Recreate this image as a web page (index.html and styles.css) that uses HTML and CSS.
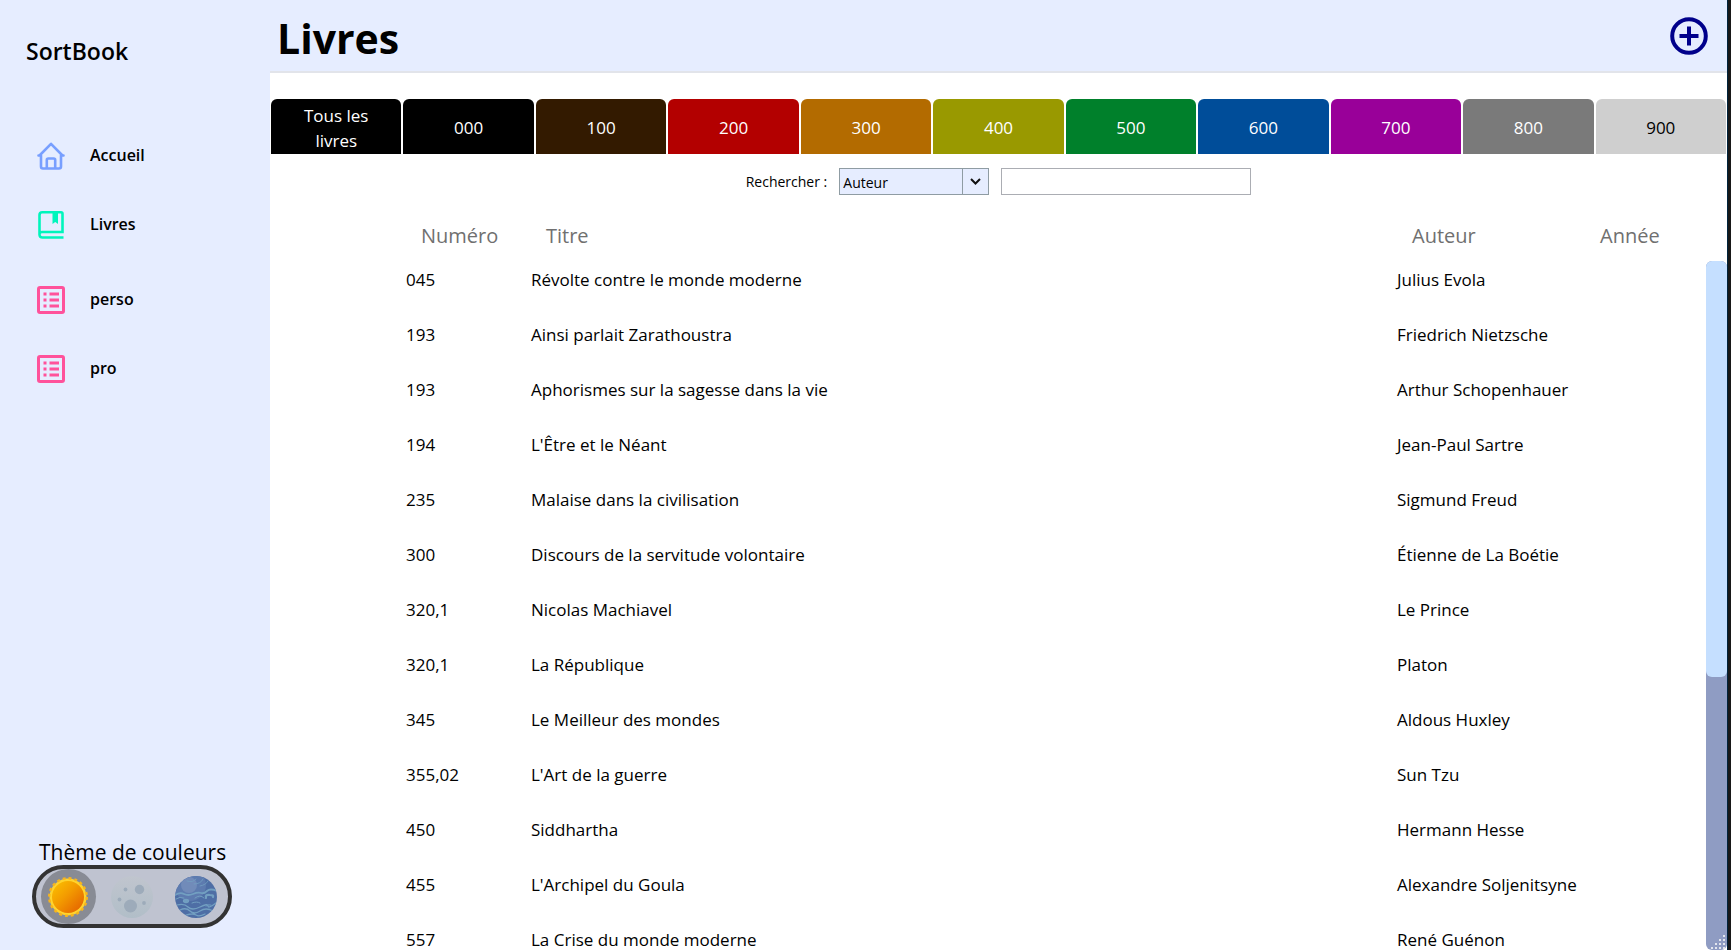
FILE: index.html
```html
<!DOCTYPE html>
<html lang="fr">
<head>
<meta charset="utf-8">
<title>SortBook</title>
<link rel="stylesheet" href="styles.css">
</head>
<body>
<div class="app">
  <aside class="sidebar">
    <div class="brand">SortBook</div>
    <nav class="nav">
      <a class="nav-link" href="#accueil">
        <svg class="nav-icon icon-home" viewBox="0 0 28 28" fill="none" stroke="currentColor" stroke-width="2.600" stroke-linejoin="round" stroke-linecap="round"><path d="M1.500 13.500h1L14 1.800l11.500 11.700h1M4 13.500v11Q4 26.500 6 26.500h16q2 0 2-2v-11M9.800 26V18q0-1.500 1.500-1.500h5.400q1.500 0 1.500 1.500v8"/></svg>
        <span>Accueil</span>
      </a>
      <a class="nav-link" href="#livres">
        <svg class="nav-icon icon-book" viewBox="0 0 28 28" fill="none" stroke="currentColor" stroke-width="2.600"><path d="M26.500 26.500H5.500Q2.500 26.500 2.500 23.500V4Q2.500 1.300 5.300 1.300H24Q25.500 1.300 25.500 2.800V21H5Q2.500 21 2.500 23.500"/><path d="M15.500 1.500h5.500v11.500l-2.750-2-2.750 2z" fill="currentColor" stroke="none"/></svg>
        <span>Livres</span>
      </a>
      <a class="nav-link list-first" href="#perso">
        <svg class="nav-icon icon-list" viewBox="0 0 28 28"><rect x="1.500" y="1.500" width="25" height="25" rx="1.500" fill="none" stroke="currentColor" stroke-width="3"/><path fill="currentColor" d="M6.500 6.500h3v3h-3zM12.500 6.500h9.500v3h-9.500zM6.500 12.500h3v3h-3zM12.500 12.500h9.500v3h-9.500zM6.500 18.500h3v3h-3zM12.500 18.500h9.500v3h-9.500z"/></svg>
        <span>perso</span>
      </a>
      <a class="nav-link" href="#pro">
        <svg class="nav-icon icon-list" viewBox="0 0 28 28"><rect x="1.500" y="1.500" width="25" height="25" rx="1.500" fill="none" stroke="currentColor" stroke-width="3"/><path fill="currentColor" d="M6.500 6.500h3v3h-3zM12.500 6.500h9.500v3h-9.500zM6.500 12.500h3v3h-3zM12.500 12.500h9.500v3h-9.500zM6.500 18.500h3v3h-3zM12.500 18.500h9.500v3h-9.500z"/></svg>
        <span>pro</span>
      </a>
    </nav>
    <fieldset class="theme">
      <legend class="theme-title">Thème de couleurs</legend>
      <div class="theme-switch">
        <label class="theme-option">
          <input class="theme-radio" type="radio" name="theme" aria-label="Clair" checked>
          <svg class="theme-icon" viewBox="0 0 42 42">
            <defs><linearGradient id="sun" x1="0" y1="0" x2="1" y2="1"><stop offset="0" stop-color="#fcc400"/><stop offset=".45" stop-color="#f39a00"/><stop offset="1" stop-color="#e25a00"/></linearGradient></defs>
            <circle cx="21" cy="21" r="18.500" fill="#ffd42e"/>
            <circle cx="21" cy="21" r="18.800" fill="none" stroke="#f8b51c" stroke-width="2.400" stroke-dasharray="2.900 3.006"/>
            <circle cx="21" cy="21" r="16" fill="url(#sun)"/>
          </svg>
        </label>
        <label class="theme-option">
          <input class="theme-radio" type="radio" name="theme" aria-label="Gris">
          <svg class="theme-icon" viewBox="0 0 42 42">
            <defs><linearGradient id="moon" x1="0" y1="0" x2="0" y2="1"><stop offset="0" stop-color="#c0c5ce"/><stop offset="1" stop-color="#b1bec8"/></linearGradient></defs>
            <circle cx="21" cy="21" r="21" fill="url(#moon)"/>
            <g fill="#9dabba"><circle cx="28.500" cy="13.500" r="4.700"/><circle cx="14.500" cy="13.500" r="1.900"/><circle cx="8.500" cy="23.500" r="1.900"/><circle cx="19.500" cy="30" r="6.500"/><circle cx="33" cy="27" r="1.900"/></g>
          </svg>
        </label>
        <label class="theme-option">
          <input class="theme-radio" type="radio" name="theme" aria-label="Bleu">
          <svg class="theme-icon" viewBox="0 0 42 42">
            <defs><clipPath id="disc"><circle cx="21" cy="21" r="21"/></clipPath></defs>
            <g clip-path="url(#disc)" fill="none" stroke="#729fc1" stroke-width="1.300" stroke-linecap="round">
              <path fill="#4e6ea5" stroke="none" d="M0 0h42v42H0z"/>
              <circle cx="15" cy="9" r="16" fill="#5d7baf" stroke="none"/>
              <circle cx="14" cy="9" r="8" fill="#718bb9" stroke="none"/>
              <path stroke-width=".8" d="M12 5q6 2 9-2M19 8q7 0 9-5M25 10q6-1 8-5"/>
              <path stroke-width="1.800" d="M0 19q5-3 9-1t9 0 8-1 6-2 10 0"/>
              <path stroke-width="1" d="M1 23q4-3 8-1M20 22q5-4 9 0"/>
              <path stroke-width="2.200" d="M31 22q-1-4 4-3 4 0 3 2"/>
              <ellipse cx="11" cy="25" rx="2.500" ry="1.500" fill="#729fc1"/>
              <path d="M2 29q7-2 11 2t12 0 8-1 8-3M5 34q6-3 10 1t10 0 13 0M11 39q7-2 10 0t9-1"/>
              <path stroke-width="1" d="M17 27q5-2 8 0M31 30q2-2 5-1"/>
            </g>
          </svg>
        </label>
      </div>
    </fieldset>
  </aside>

  <main class="main">
    <header class="topbar">
      <h1 class="title">Livres</h1>
      <button class="add" type="button" aria-label="Ajouter un livre">
        <svg class="add-icon" viewBox="0 0 38 38" fill="none" stroke="currentColor" stroke-width="4"><circle cx="19" cy="19" r="16.800"/><path d="M19 9.500v19M9.500 19h19"/></svg>
      </button>
    </header>

    <div class="tabs">
      <button type="button" class="tab c-all">Tous les livres</button>
      <button type="button" class="tab c-000">000</button>
      <button type="button" class="tab c-100">100</button>
      <button type="button" class="tab c-200">200</button>
      <button type="button" class="tab c-300">300</button>
      <button type="button" class="tab c-400">400</button>
      <button type="button" class="tab c-500">500</button>
      <button type="button" class="tab c-600">600</button>
      <button type="button" class="tab c-700">700</button>
      <button type="button" class="tab c-800">800</button>
      <button type="button" class="tab c-900">900</button>
    </div>

    <form class="search">
      <label class="search-label" for="field">Rechercher :</label>
      <div class="select-box">
        <select class="select" id="field"><option>Auteur</option><option>Titre</option><option>Numéro</option></select>
        <svg class="chevron" viewBox="0 0 25 25" fill="none" stroke="#111" stroke-width="2"><path d="M8 10l4.500 4.500 4.500-4.500"/></svg>
      </div>
      <input class="search-input" type="text" aria-label="Texte à rechercher">
    </form>

    <div class="list">
      <table class="books">
        <colgroup><col class="col-num"><col><col class="col-author"><col class="col-year"></colgroup>
        <thead><tr><th>Numéro</th><th>Titre</th><th>Auteur</th><th>Année</th></tr></thead>
        <tbody>
          <tr><td>045</td><td>Révolte contre le monde moderne</td><td>Julius Evola</td><td></td></tr>
          <tr><td>193</td><td>Ainsi parlait Zarathoustra</td><td>Friedrich Nietzsche</td><td></td></tr>
          <tr><td>193</td><td>Aphorismes sur la sagesse dans la vie</td><td>Arthur Schopenhauer</td><td></td></tr>
          <tr><td>194</td><td>L'Être et le Néant</td><td>Jean-Paul Sartre</td><td></td></tr>
          <tr><td>235</td><td>Malaise dans la civilisation</td><td>Sigmund Freud</td><td></td></tr>
          <tr><td>300</td><td>Discours de la servitude volontaire</td><td>Étienne de La Boétie</td><td></td></tr>
          <tr><td>320,1</td><td>Nicolas Machiavel</td><td>Le Prince</td><td></td></tr>
          <tr><td>320,1</td><td>La République</td><td>Platon</td><td></td></tr>
          <tr><td>345</td><td>Le Meilleur des mondes</td><td>Aldous Huxley</td><td></td></tr>
          <tr><td>355,02</td><td>L'Art de la guerre</td><td>Sun Tzu</td><td></td></tr>
          <tr><td>450</td><td>Siddhartha</td><td>Hermann Hesse</td><td></td></tr>
          <tr><td>455</td><td>L'Archipel du Goula</td><td>Alexandre Soljenitsyne</td><td></td></tr>
          <tr><td>557</td><td>La Crise du monde moderne</td><td>René Guénon</td><td></td></tr>
        </tbody>
      </table>
      <div class="scrollbar">
        <div class="thumb"></div>
        <svg class="grip" viewBox="0 0 16 16" fill="#e3e6ee"><path d="M13 1h2v2h-2zM13 5h2v2h-2zM9 5h2v2H9zM13 9h2v2h-2zM9 9h2v2H9zM5 9h2v2H5zM13 13h2v2h-2zM9 13h2v2H9zM5 13h2v2H5zM1 13h2v2H1z"/></svg>
      </div>
    </div>
  </main>
  <div class="edge"></div>
</div>
</body>
</html>
```

FILE: styles.css
```css
* { box-sizing: border-box; }

body {
  margin: 0;
  font-family: "Open Sans", "Noto Sans", sans-serif;
  color: #000;
  background: #fff;
}

button, input, select { font-family: inherit; }

.app {
  display: flex;
  height: 100vh;
  overflow: hidden;
}

/* Sidebar */
.sidebar {
  flex: none;
  width: 270px;
  display: flex;
  flex-direction: column;
  background: #e6edff;
}

.brand {
  padding: 34px 26px 0;
  font-size: 23px;
  line-height: 34px;
  font-weight: 600;
}

.nav {
  display: flex;
  flex-direction: column;
  gap: 9px;
  padding: 58px 0 0 37px;
}

.nav-link {
  display: flex;
  align-items: center;
  gap: 25px;
  height: 60px;
  color: #000;
  text-decoration: none;
  font-size: 16px;
  font-weight: 600;
}

.nav-link span { padding-bottom: 3px; }

.list-first { margin-top: 6px; }

.nav-icon { width: 28px; height: 28px; }
.icon-home { color: #789fff; }
.icon-book { color: #00f5bc; }
.icon-list { color: #ff529b; }

.theme {
  margin: auto 0 0;
  padding: 0 0 22px 32px;
  border: 0;
}

.theme-title {
  padding: 0 0 0 7px;
  font-size: 21px;
  line-height: 26px;
}

.theme-switch {
  display: flex;
  width: 200px;
  height: 63px;
  border: 4px solid #333;
  border-radius: 32px;
  background: #bfc3d0;
}

.theme-option {
  position: relative;
  flex: 1;
  display: flex;
  align-items: center;
  justify-content: center;
}

.theme-radio {
  position: absolute;
  width: 55px;
  height: 55px;
  margin: 0;
  appearance: none;
  border-radius: 50%;
}

.theme-radio:checked { background: #888b94; }

.theme-icon { position: relative; width: 42px; height: 42px; }

/* Main column */
.main {
  flex: 1;
  min-width: 0;
  display: flex;
  flex-direction: column;
}

.topbar {
  flex: none;
  display: flex;
  justify-content: space-between;
  align-items: center;
  height: 73px;
  padding: 0 19px 0 7px;
  background: #e6edff;
  border-bottom: 2px solid #e2e4ea;
}

.title {
  margin: 0;
  padding-top: 5px;
  font-size: 41px;
  line-height: 60px;
  font-weight: 700;
}

.add {
  width: 38px;
  height: 38px;
  padding: 0;
  border: 0;
  background: none;
  color: #00008b;
}

.add-icon { display: block; }

.tabs {
  flex: none;
  display: flex;
  gap: 2px;
  padding: 26px 1px 0;
}

.tab {
  flex: 1 1 0;
  min-width: 0;
  height: 55px;
  padding: 2px 28px 0;
  border: 0;
  border-radius: 6px 6px 0 0;
  color: #fff;
  font-size: 17px;
  line-height: 25px;
}

.c-all, .c-000 { background: #000; }
.c-100 { background: #331a00; }
.c-200 { background: #b30000; }
.c-300 { background: #b36b00; }
.c-400 { background: #999900; }
.c-500 { background: #00802b; }
.c-600 { background: #004d99; }
.c-700 { background: #990099; }
.c-800 { background: #7a7a7a; }
.c-900 { background: #cfcfcf; color: #000; }

.search {
  flex: none;
  display: flex;
  justify-content: center;
  align-items: center;
  gap: 12px;
  padding-top: 14px;
}

.search-label { font-size: 14px; }

.select-box { position: relative; width: 150px; height: 27px; }

.select {
  width: 100%;
  height: 100%;
  padding: 1px 3px 0;
  border: 1px solid #8f9ca3;
  border-radius: 0;
  appearance: none;
  background: #e6edff;
  color: #000;
  font-size: 14px;
}

.chevron {
  position: absolute;
  top: 1px;
  right: 1px;
  width: 26px;
  height: 25px;
  border-left: 1px solid #8f9ca3;
  pointer-events: none;
}

.search-input {
  width: 250px;
  height: 27px;
  border: 1px solid #abadb3;
  background: #fff;
  font-size: 14px;
}

.list {
  flex: 1;
  min-height: 0;
  display: flex;
  padding: 17px 0 0 136px;
}

.books {
  flex: 1;
  align-self: flex-start;
  table-layout: fixed;
  width: 0;
  border-collapse: collapse;
}

.col-num { width: 125px; }
.col-author { width: 188px; }
.col-year { width: 121px; }

.books th {
  height: 41px;
  padding: 6px 0 0 15px;
  text-align: left;
  font-size: 20px;
  line-height: 28px;
  font-weight: 400;
  color: #707070;
}

.books td {
  height: 55px;
  padding: 0 0 2px;
  font-size: 17px;
  line-height: 24px;
  white-space: nowrap;
}

.scrollbar {
  flex: none;
  position: relative;
  width: 21px;
  margin-top: 49px;
  border-radius: 6px;
  background: #8f9cc3;
}

.thumb {
  height: 60.4%;
  border-radius: 6px;
  background: #c5dfff;
}

.grip {
  position: absolute;
  right: 1px;
  bottom: 0;
  width: 16px;
  height: 16px;
}

.edge {
  flex: none;
  width: 4px;
  background: #181818;
  border-left: 1px solid #00233d;
}
```
